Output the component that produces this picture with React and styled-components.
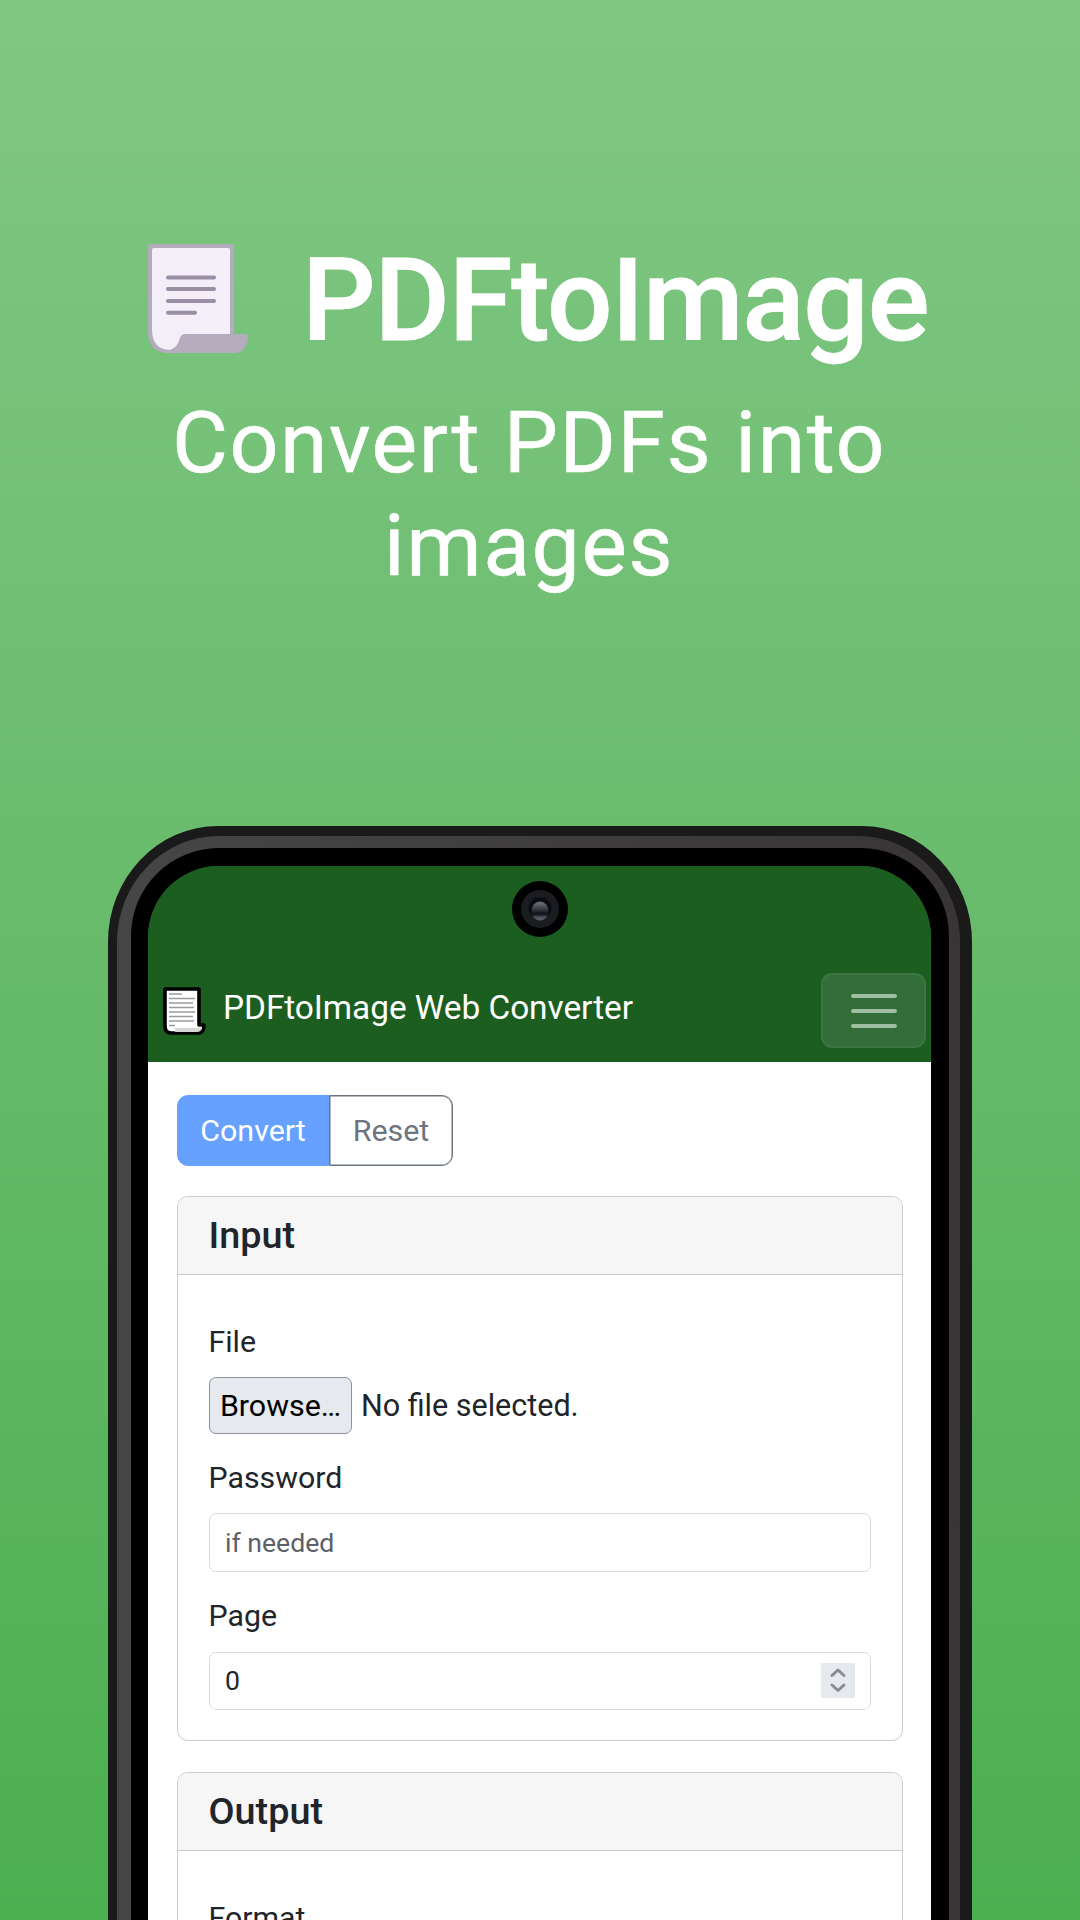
import React from "react";
import styled, { createGlobalStyle } from "styled-components";

const GlobalStyle = createGlobalStyle`
  *, *::before, *::after { box-sizing: border-box; }
  body { margin: 0; }
`;

const Page = styled.main`
  width: 1080px;
  height: 1920px;
  overflow: hidden;
  display: flex;
  flex-direction: column;
  align-items: center;
  background: linear-gradient(180deg, #81c784 0%, #4caf50 100%);
  font-family: Roboto, "Liberation Sans", sans-serif;
  color: #212529;
`;

const Hero = styled.header`
  width: 100%;
  height: 826px;
  flex: none;
  padding-top: 232px;
  color: #fff;
`;

const Brand = styled.div`
  display: flex;
  height: 136px;
  padding: 0 0 0 148px;
  gap: 54px;
  align-items: center;
`;

const BrandIcon = styled.svg`
  width: 100px;
  height: 110px;
  flex: none;
  margin-bottom: 2px;
`;

const Title = styled.h1`
  margin: 1px 0 0;
  font-size: 115.5px;
  line-height: 136px;
  font-weight: 500;
  letter-spacing: -1.2px;
  white-space: nowrap;
  -webkit-text-stroke: 0.8px #fff;
`;

const Tagline = styled.p`
  margin: 23px 0 0;
  padding: 0 142px 0 120px;
  font-size: 86px;
  line-height: 103px;
  letter-spacing: 1.5px;
  text-align: center;
  -webkit-text-stroke: 0.5px #fff;
`;

const Phone = styled.section`
  width: 864px;
  height: 1300px;
  flex: none;
  padding: 10px 12px 0 9px;
  border-radius: 110px 110px 0 0 / 116px 116px 0 0;
  background: #1a1a1a;
`;

const Rim = styled.div`
  height: 100%;
  padding: 12px 11px 0 14px;
  border-radius: 102px 102px 0 0 / 106px 106px 0 0;
  background: linear-gradient(90deg, #464646, #393536);
`;

const Bezel = styled.div`
  height: 100%;
  padding: 18px 18px 0 17px;
  border-radius: 88px 88px 0 0;
  background: #000;
`;

const Screen = styled.div`
  height: 100%;
  overflow: hidden;
  border-radius: 71px 71px 0 0;
  background: linear-gradient(180deg, #1b5e20 0 190px, #fff 190px);
`;

const StatusBar = styled.div`
  height: 94px;
  padding-top: 15px;
  display: flex;
  justify-content: center;
  background: #1b5e20;
`;

const Camera = styled.svg`
  width: 56px;
  height: 56px;
`;

const Navbar = styled.nav`
  height: 102px;
  padding: 0 5px 1px 14px;
  display: flex;
  align-items: center;
  background: #1b5e20;
`;

const NavIcon = styled.svg`
  width: 45px;
  height: 50px;
  flex: none;
  margin-top: 1px;
`;

const NavTitle = styled.span`
  flex: 1;
  margin: 0 0 5px 16px;
  font-size: 33.4px;
  line-height: 40px;
  letter-spacing: -0.05px;
  color: #fff;
  white-space: nowrap;
`;

const MenuButton = styled.button`
  width: 105px;
  height: 75px;
  padding: 0;
  display: flex;
  flex-direction: column;
  align-items: center;
  justify-content: center;
  gap: 11px;
  border: 2px solid #3c7542;
  border-radius: 11px;
  background: #326d3a;
`;

const MenuBar = styled.span`
  width: 46px;
  height: 4px;
  border-radius: 2px;
  background: #9fbea2;
`;

const Content = styled.div`
  padding: 33px 28px 0 29px;
  display: flex;
  flex-direction: column;
`;

const ButtonGroup = styled.div`
  display: flex;
  height: 71px;
  margin-bottom: 30px;
`;

const ActionButton = styled.button`
  width: ${(p) => p.$width};
  padding: 1px 0 0;
  font: 400 30.4px/36px Roboto, sans-serif;
  color: ${(p) => (p.$primary ? "#fff" : "#6c757d")};
  background: ${(p) => (p.$primary ? "#66a1ff" : "#fff")};
  border: 1px solid ${(p) => (p.$primary ? "#66a1ff" : "#6c757d")};
  border-radius: ${(p) => (p.$primary ? "11px 0 0 11px" : "0 11px 11px 0")};
  box-shadow: ${(p) => (p.$primary ? "none" : "inset 0 0 0 0.5px #6c757d")};
`;

const Card = styled.section`
  height: ${(p) => p.$height};
  margin-bottom: 31px;
  border: 1px solid #cbcccd;
  border-radius: 11px;
  overflow: hidden;
`;

const CardHeader = styled.h2`
  margin: 0;
  height: 78px;
  padding-left: 30.5px;
  font-size: 37.8px;
  line-height: 77px;
  font-weight: 500;
  border-bottom: 1px solid #cbcccd;
  background: #f6f6f7;
`;

const CardBody = styled.div`
  padding: 49px 31px 0;
  display: flex;
  flex-direction: column;
`;

const Label = styled.label`
  font-size: 30.3px;
  line-height: 36px;
  margin: 0 0 17px -0.5px;
`;

const FileRow = styled.div`
  display: flex;
  align-items: center;
  height: 57px;
  gap: 9px;
  margin-bottom: 26px;
  font-size: 30.5px;
  line-height: 36px;
`;

const BrowseButton = styled.button`
  width: 143px;
  height: 57px;
  padding: 0;
  font: 400 30.4px/36px Roboto, sans-serif;
  color: #000;
  background: #e6eaef;
  border: 1px solid #8f8f9d;
  border-radius: 7px;
`;

const Field = styled.div`
  display: flex;
  align-items: center;
  justify-content: space-between;
  height: ${(p) => p.$height};
  margin-bottom: ${(p) => p.$after || "0"};
  padding: 0 15px;
  font-size: 26.6px;
  line-height: 34px;
  color: ${(p) => (p.$muted ? "#5d6167" : "#212529")};
  border: 1px solid #d8dce0;
  border-radius: 7px;
`;

const PageField = styled(Field)`
  margin-top: 1px;
`;

const Spinner = styled.svg`
  width: 34px;
  height: 35px;
  margin-bottom: 1px;
  background: #e6eaef;
`;

function ScrollLogo() {
  return (
    <BrandIcon viewBox="0 0 100 110">
      <path d="M4 0H82Q86 0 86 4V90H97Q100 90 100 94Q98 109 86 109H18Q0 107 0 88V4Q0 0 4 0Z" fill="#b4acbc" />
      <path d="M6 4H80Q82 4 82 6V90H38Q33 90 32 94Q30 103 22 106Q4 105 4 86V6Q4 4 6 4Z" fill="#f3eef8" />
      <path d="M20 33.5H66M20 45H66M20 57H66M20 68.8H47" stroke="#998ea4" strokeWidth="4" strokeLinecap="round" />
    </BrandIcon>
  );
}

function PageIcon() {
  return (
    <NavIcon viewBox="0 0 45 50">
      <path d="M3 3H37V39H42Q42 47 36 47H9Q3 47 3 40Z" fill="#fff" stroke="#000" strokeWidth="3.6" strokeLinejoin="round" />
      <path d="M12 42H40Q39 46 35 46H12Q15 45 12 42Z" fill="#d7d7d7" />
      <path d="M7 8H20M7 12.5H33M7 17H31M7 21.5H32M7 26H33M7 30.5H31M7 35H32M7 39.5H13" stroke="#9a9a9a" strokeWidth="1.5" />
    </NavIcon>
  );
}

function CameraLens() {
  return (
    <Camera viewBox="0 0 56 56">
      <defs>
        <linearGradient id="lens" x1="0" y1="0" x2="0" y2="1">
          <stop offset="0" stopColor="#74757f" />
          <stop offset="0.5" stopColor="#2c2d34" />
          <stop offset="0.62" stopColor="#101116" />
          <stop offset="0.72" stopColor="#22232a" />
          <stop offset="0.82" stopColor="#50525c" />
          <stop offset="1" stopColor="#5c5e6a" />
        </linearGradient>
      </defs>
      <circle cx="28" cy="28" r="28" fill="#000" />
      <circle cx="28" cy="28" r="19" fill="#1a1c20" />
      <ellipse cx="28" cy="27" rx="11.5" ry="10.5" fill="#0b0c12" />
      <ellipse cx="28" cy="30" rx="8.5" ry="9.5" fill="url(#lens)" />
    </Camera>
  );
}

export default function App() {
  return (
    <Page>
      <GlobalStyle />
      <Hero>
        <Brand>
          <ScrollLogo />
          <Title>PDFtoImage</Title>
        </Brand>
        <Tagline>
          Convert PDFs into
          <br />
          images
        </Tagline>
      </Hero>
      <Phone>
        <Rim>
          <Bezel>
            <Screen>
              <StatusBar>
                <CameraLens />
              </StatusBar>
              <Navbar>
                <PageIcon />
                <NavTitle>PDFtoImage Web Converter</NavTitle>
                <MenuButton aria-label="Menu">
                  <MenuBar />
                  <MenuBar />
                  <MenuBar />
                </MenuButton>
              </Navbar>
              <Content>
                <ButtonGroup>
                  <ActionButton $primary $width="152px">Convert</ActionButton>
                  <ActionButton $width="124px">Reset</ActionButton>
                </ButtonGroup>
                <Card $height="545px">
                  <CardHeader>Input</CardHeader>
                  <CardBody>
                    <Label>File</Label>
                    <FileRow>
                      <BrowseButton>Browse…</BrowseButton>
                      <span>No file selected.</span>
                    </FileRow>
                    <Label>Password</Label>
                    <Field $muted $height="59px" $after="26px">if needed</Field>
                    <Label>Page</Label>
                    <PageField $height="58px">
                      <span>0</span>
                      <Spinner viewBox="0 0 34 35">
                        <path d="M11 12.5L17 7L23 12.5M11 22L17 27.5L23 22" fill="none" stroke="#8a8a94" strokeWidth="3" strokeLinecap="round" strokeLinejoin="round" />
                      </Spinner>
                    </PageField>
                  </CardBody>
                </Card>
                <Card $height="400px">
                  <CardHeader>Output</CardHeader>
                  <CardBody>
                    <Label>Format</Label>
                  </CardBody>
                </Card>
              </Content>
            </Screen>
          </Bezel>
        </Rim>
      </Phone>
    </Page>
  );
}
